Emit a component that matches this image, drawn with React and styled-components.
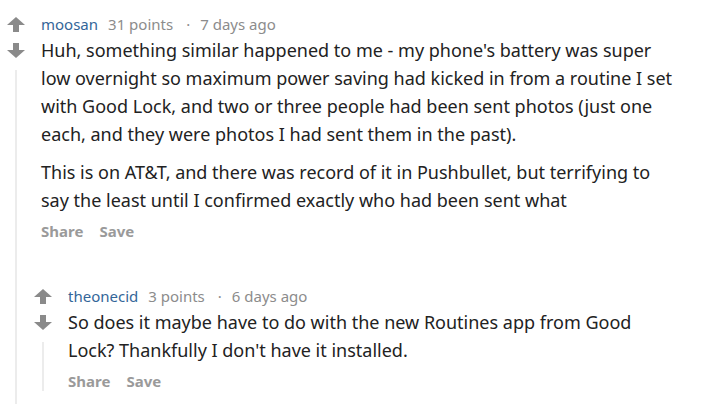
import React from "react";
import styled, { createGlobalStyle } from "styled-components";

const GlobalStyle = createGlobalStyle`
  html, body {
    margin: 0;
    padding: 0;
    background: #ffffff;
  }
  body {
    font-family: "Noto Sans", "Open Sans", sans-serif;
  }
`;

const Page = styled.div`
  width: 720px;
  height: 404px;
  overflow: hidden;
  padding-left: 7px;
  box-sizing: border-box;
`;

const CommentRow = styled.div`
  display: flex;
  align-items: stretch;
  padding-bottom: ${(p) => p.$bottom || 0}px;
`;

const VoteColumn = styled.div`
  width: 18px;
  flex: 0 0 18px;
  display: flex;
  flex-direction: column;
  align-items: center;
  padding-top: 16px;
`;

const ArrowButton = styled.div`
  width: 18px;
  height: 16px;
  display: flex;
  align-items: center;
  justify-content: center;
  margin-bottom: ${(p) => p.$gap || 0}px;
  color: #8a8a8a;
`;

const ThreadLine = styled.div`
  width: 2px;
  flex: 1;
  margin-top: 2px;
  background: #ececec;
`;

const Main = styled.div`
  margin-left: 16px;
  flex: 1;
  min-width: 0;
`;

const Meta = styled.div`
  display: flex;
  align-items: center;
  height: 24px;
  margin-top: 12px;
  font-size: 15px;
  color: #8c8c8c;
  white-space: nowrap;
`;

const Author = styled.span`
  color: #336699;
  margin-right: 10px;
`;

const Dot = styled.span`
  margin: 0 10px 0 13px;
`;

const Body = styled.div`
  color: #222222;
  font-size: 18px;
  line-height: 28px;
  padding-right: 41px;
`;

const Para = styled.p`
  margin: 0;
  & + & {
    margin-top: 10px;
  }
`;

const Actions = styled.div`
  display: flex;
  gap: 16px;
  margin-top: 7px;
  height: 20px;
  align-items: center;
  font-size: 15px;
  font-weight: 700;
  color: #9a9a9a;
`;

const Replies = styled.div`
  margin-left: -7px;
  margin-top: 31px;
`;

const UpArrow = () => (
  <svg width="18" height="15" viewBox="0 0 18 15">
    <path d="M9 0 L18 8 L12 8 L12 15 L6 15 L6 8 L0 8 Z" fill="currentColor" />
  </svg>
);

const DownArrow = () => (
  <svg width="18" height="15" viewBox="0 0 18 15">
    <path d="M9 15 L18 7 L12 7 L12 0 L6 0 L6 7 L0 7 Z" fill="currentColor" />
  </svg>
);

const Comment = ({ author, points, age, paragraphs, children, bottom }) => (
  <CommentRow $bottom={bottom}>
    <VoteColumn>
      <ArrowButton $gap={10}>
        <UpArrow />
      </ArrowButton>
      <ArrowButton $gap={10}>
        <DownArrow />
      </ArrowButton>
      <ThreadLine />
    </VoteColumn>
    <Main>
      <Meta>
        <Author>{author}</Author>
        <span>{points}</span>
        <Dot>·</Dot>
        <span>{age}</span>
      </Meta>
      <Body>
        {paragraphs.map((text, i) => (
          <Para key={i}>{text}</Para>
        ))}
      </Body>
      <Actions>
        <span>Share</span>
        <span>Save</span>
      </Actions>
      {children}
    </Main>
  </CommentRow>
);

export default function App() {
  return (
    <>
      <GlobalStyle />
      <Page>
        <Comment
          author="moosan"
          points="31 points"
          age="7 days ago"
          paragraphs={[
            "Huh, something similar happened to me - my phone's battery was super low overnight so maximum power saving had kicked in from a routine I set with Good Lock, and two or three people had been sent photos (just one each, and they were photos I had sent them in the past).",
            "This is on AT&T, and there was record of it in Pushbullet, but terrifying to say the least until I confirmed exactly who had been sent what",
          ]}
        >
          <Replies>
            <Comment
              author="theonecid"
              points="3 points"
              age="6 days ago"
              bottom={22}
              paragraphs={[
                "So does it maybe have to do with the new Routines app from Good Lock? Thankfully I don't have it installed.",
              ]}
            />
          </Replies>
        </Comment>
      </Page>
    </>
  );
}
